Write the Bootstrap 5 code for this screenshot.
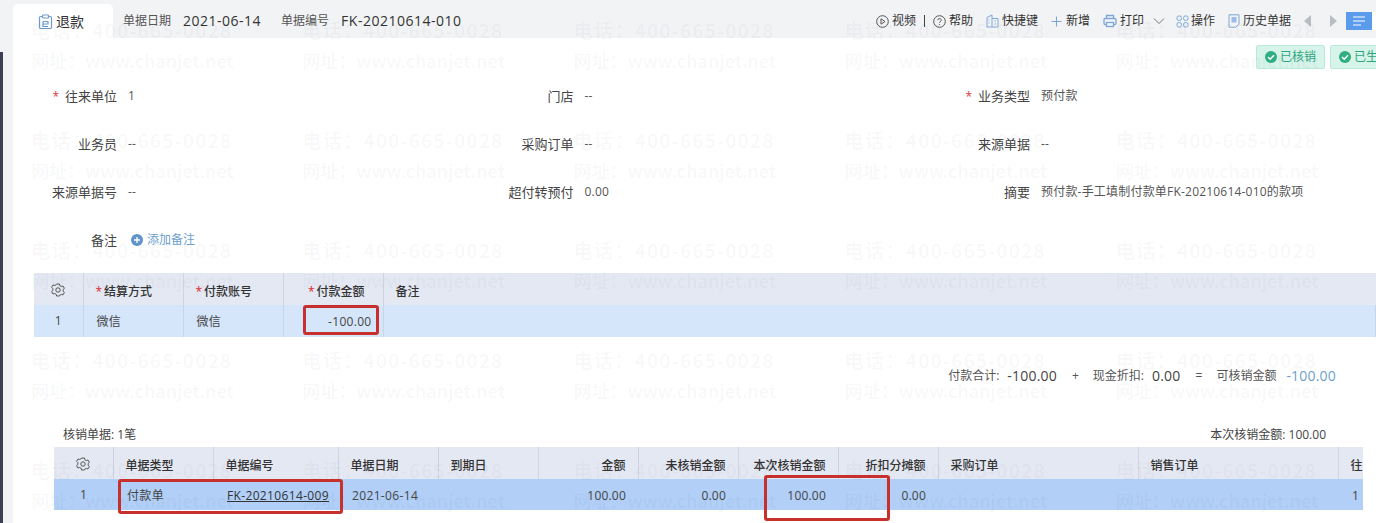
<!DOCTYPE html>
<html lang="zh">
<head>
<meta charset="utf-8">
<title>退款</title>
<link rel="stylesheet" href="https://cdn.jsdelivr.net/npm/bootstrap@5.3.0/dist/css/bootstrap.min.css">
<style>
html,body{height:523px;overflow:hidden;background:#f2f3f5}
body{font-family:"Open Sans","Noto Sans CJK SC",sans-serif;font-size:12px;color:#444;position:relative}
.side-strip{width:3px;background:#3d4054;flex:none;margin-top:52px}
.page-shell{width:1376px;height:523px}
.page-main{padding-left:10px;min-width:0;flex:1 1 auto}
.top-bar{height:38px;padding-top:4px}
.doc-tab{width:100px;height:34px;background:#fff;border-radius:5px 5px 0 0;padding-left:25px;font-size:14px;color:#333;line-height:36px;gap:3px;padding-top:2px}
.doc-tab svg{flex:none}
.meta-label{color:#555;margin-left:10px;margin-right:12px;line-height:34px}
.meta-value{font-size:14px;color:#333;letter-spacing:.5px;line-height:34px}
.meta-second{margin-left:20px}
.tool-strip{margin-left:auto;height:34px}
.tool-item{gap:3px;color:#333;white-space:nowrap}
.tool-item svg{display:block;flex:none}
.tool-sep{width:1px;height:12px;background:#444;margin:0 8px}
.gap-13{margin-left:13px}
.gap-9{margin-left:9px}
.gap-11{margin-left:11px}
.gap-17{margin-left:17px}
.grid-tool{gap:2px}
.plus-tool{gap:4px}
.menu-btn{width:26px;height:18px;background:#5a9bec;margin-left:9px}
.menu-rest{width:4px;height:18px;background:#fff}
.content-area{background:#fff;height:485px;position:relative;overflow:hidden}
.tag-row{position:absolute;top:7px;left:1243px;gap:5px;white-space:nowrap}
.state-tag{height:24px;background:#d6f4e9;border:1px solid #b9ead8;color:#2fa57d;padding:0 8px;gap:3px;border-radius:2px;font-size:12px}
.form-grid{display:grid;grid-template-columns:repeat(3,456.5px);grid-auto-rows:48px;padding-top:34px}
.form-cell{display:grid;grid-template-columns:104px 1fr;column-gap:11px;height:48px;line-height:48px;white-space:nowrap}
.form-label{text-align:right;color:#444;font-size:13px}
.req{color:#d9363e;margin-right:6px;font-size:12px}
.form-value{color:#555;letter-spacing:.2px}
.note-cell{grid-column:1/4}
.note-add{color:#6da0cf;gap:4px;margin-left:3px;line-height:1;height:48px}
.grid-one{margin-top:9px;margin-left:21px;position:relative}
.grid-two{margin-left:41px;position:relative;width:1309px}
.sheet{table-layout:fixed;margin:0;border-collapse:collapse;color:#444}
.sheet>*>tr>*{background:transparent;box-shadow:none;padding:0 12px;border:0;vertical-align:middle;white-space:nowrap;overflow:hidden;font-size:12px;color:#444;border-right:1px solid #cfd4df}
.sheet>thead>tr{background:#e4e8f2;height:32px}
.sheet>thead th{font-weight:500;color:#333;padding-top:5px}
.sheet>thead>tr>th:first-child,.sheet>tbody>tr>td:first-child{padding:0;text-align:center}
.sheet>*>tr>*:last-child{border-right:0}
.sheet .amt{text-align:right}
.sheet>tbody td{padding-top:2px;padding-left:13px;letter-spacing:.3px}
.sheet-one>thead .amt{padding-right:18px}
.sheet-one>tbody .amt{padding-right:11px;padding-left:0}
.sheet-two>tbody td{padding-left:14px;padding-top:3px;letter-spacing:.35px}
.sheet-two>tbody .amt{padding-right:12px;padding-left:0;letter-spacing:.2px}
.sheet-two>thead .amt{padding-right:12px;padding-left:0}
.row-soft{background:#d5e6fa;height:32px}
.row-strong{background:#b1cff7;height:31px}
.row-strong td{border-right:0!important}
.row-soft td{border-right:1px solid #c5d5ea!important}
.sheet .red-star{color:#d9262c;font-weight:400;margin-right:2px}
.doc-link{color:#333}
.mark-box{position:absolute;border:3px solid #c8302e;border-radius:3px;pointer-events:none}
.mark-a{left:269px;top:32px;width:76px;height:30px}
.mark-b{left:64px;top:32px;width:225px;height:35px}
.mark-c{left:710px;top:28px;width:126px;height:46px}
.sum-line{margin-top:23px;height:32px;padding-right:40px;line-height:32px;justify-content:flex-end;color:#555}
.sum-num{font-size:14px;color:#444;margin-left:8px;letter-spacing:.2px}
.sum-op{margin:0 14px 0 15px;color:#555}
.sum-blue{color:#6d9fcb;margin-left:10px}
.grid-caption{margin-top:31px;height:24px;padding:0 50px 0 50px;line-height:24px;color:#444}
.mark-layer{position:absolute;inset:0;pointer-events:none;z-index:5;display:grid;grid-template-columns:repeat(6,271.2px);grid-auto-rows:110px;padding-left:31px;padding-top:15px;font-family:"Noto Sans CJK SC","Open Sans",sans-serif;color:rgba(40,50,70,.05);font-size:19px;font-weight:500;line-height:30px;white-space:nowrap;overflow:hidden}
.mark-tel{letter-spacing:1.5px;display:block}
.mark-web{display:block;font-size:18px;letter-spacing:.1px}
</style>
</head>
<body>
<div class="page-shell d-flex">
  <div class="side-strip"></div>
  <div class="page-main">
    <div class="top-bar d-flex align-items-start">
      <div class="doc-tab d-flex align-items-center">
        <svg width="15" height="16" viewBox="0 0 15 16" fill="none" stroke="#6f9bd1" stroke-width="1.2"><path d="M4 2.5H2.8A1.3 1.3 0 0 0 1.5 3.8v9.4a1.3 1.3 0 0 0 1.3 1.3h9.4a1.3 1.3 0 0 0 1.3-1.3V3.8a1.3 1.3 0 0 0-1.3-1.3H11"/><rect x="4.5" y="1" width="6" height="3" rx=".7"/><path d="M5 7.5h5v2.5H5M5 7.5v5h5"/></svg>
        <span>退款</span>
      </div>
      <span class="meta-label">单据日期</span><span class="meta-value">2021-06-14</span>
      <span class="meta-label meta-second">单据编号</span><span class="meta-value">FK-20210614-010</span>
      <div class="tool-strip d-flex align-items-center">
        <span class="tool-item d-flex align-items-center"><svg width="13" height="13" viewBox="0 0 13 13" fill="none" stroke="#555"><circle cx="6.5" cy="6.5" r="5.8"/><path d="M5 3.8v5.4l4-2.7z"/></svg>视频</span>
        <span class="tool-sep"></span>
        <span class="tool-item d-flex align-items-center"><svg width="13" height="13" viewBox="0 0 13 13" fill="none" stroke="#555"><circle cx="6.5" cy="6.5" r="5.8"/><path d="M4.8 5.2a1.7 1.7 0 1 1 2.5 1.5c-.6.3-.8.6-.8 1.2M6.5 9.2v.9"/></svg>帮助</span>
        <span class="tool-item gap-13 d-flex align-items-center"><svg width="13" height="14" viewBox="0 0 13 14" fill="none" stroke="#7ea6d8"><path d="M1 13V3.5L6 1v12M6 4.5h6V13H.5M3 5.5v1M3 8.5v1M8.5 7h1.5M8.5 10h1.5"/></svg>快捷键</span>
        <span class="tool-item plus-tool gap-13 d-flex align-items-center"><svg width="11" height="11" viewBox="0 0 11 11" fill="none" stroke="#7ea6d8" stroke-width="1.1"><path d="M5.5 .5v10M.5 5.5h10"/></svg>新增</span>
        <span class="tool-item gap-13 d-flex align-items-center"><svg width="14" height="14" viewBox="0 0 14 14" fill="none" stroke="#7ea6d8" stroke-width="1.3"><path d="M3.5 4.5V1.5h7v3"/><path d="M3.5 10.5H2.2A1.2 1.2 0 0 1 1 9.3V5.7a1.2 1.2 0 0 1 1.2-1.2h9.6A1.2 1.2 0 0 1 13 5.7v3.6a1.2 1.2 0 0 1-1.2 1.2h-1.3"/><rect x="3.5" y="8.5" width="7" height="4"/></svg>打印</span>
        <svg class="gap-9" width="12" height="8" viewBox="0 0 12 8" fill="none" stroke="#777"><path d="M1 1.5l5 5 5-5"/></svg>
        <span class="tool-item grid-tool gap-11 d-flex align-items-center"><svg width="13" height="13" viewBox="0 0 13 13" fill="none" stroke="#7ea6d8"><rect x="1" y="1" width="4.4" height="4.4" rx="1.6"/><rect x="7.6" y="1" width="4.4" height="4.4" rx="1.6"/><rect x="1" y="7.6" width="4.4" height="4.4" rx="1.6"/><rect x="7.6" y="7.6" width="4.4" height="4.4" rx="1.6"/></svg>操作</span>
        <span class="tool-item gap-13 d-flex align-items-center"><svg width="12" height="14" viewBox="0 0 12 14" fill="none" stroke="#7ea6d8"><path d="M1 .8h10v9.5L7.5 13.2H1z"/><path d="M3.5 3h5v5.5h-5z" fill="#9dbde6" stroke="none"/></svg>历史单据</span>
        <svg class="gap-13" width="8" height="12" viewBox="0 0 8 12" fill="#b8bcc3"><path d="M7 0v12L0 6z"/></svg>
        <svg class="gap-17" width="8" height="12" viewBox="0 0 8 12" fill="#b8bcc3"><path d="M1 0v12l7-6z"/></svg>
        <div class="menu-btn d-flex align-items-center justify-content-center"><svg width="14" height="10" viewBox="0 0 14 10" stroke="#fff"><path d="M1 1h12M1 5h12M1 9h8"/></svg></div>
        <div class="menu-rest"></div>
      </div>
    </div>

    <div class="content-area">
      <div class="tag-row d-flex">
        <span class="state-tag d-inline-flex align-items-center"><svg width="12" height="12" viewBox="0 0 12 12"><circle cx="6" cy="6" r="6" fill="#2fae82"/><path d="M3 6l2.2 2.2L9 4.2" fill="none" stroke="#fff" stroke-width="1.5"/></svg>已核销</span>
        <span class="state-tag d-inline-flex align-items-center"><svg width="12" height="12" viewBox="0 0 12 12"><circle cx="6" cy="6" r="6" fill="#2fae82"/><path d="M3 6l2.2 2.2L9 4.2" fill="none" stroke="#fff" stroke-width="1.5"/></svg>已生成</span>
      </div>

      <div class="form-grid">
        <div class="form-cell"><span class="form-label"><span class="req">*</span>往来单位</span><span class="form-value">1</span></div>
        <div class="form-cell"><span class="form-label">门店</span><span class="form-value">--</span></div>
        <div class="form-cell"><span class="form-label"><span class="req">*</span>业务类型</span><span class="form-value">预付款</span></div>
        <div class="form-cell"><span class="form-label">业务员</span><span class="form-value">--</span></div>
        <div class="form-cell"><span class="form-label">采购订单</span><span class="form-value">--</span></div>
        <div class="form-cell"><span class="form-label">来源单据</span><span class="form-value">--</span></div>
        <div class="form-cell"><span class="form-label">来源单据号</span><span class="form-value">--</span></div>
        <div class="form-cell"><span class="form-label">超付转预付</span><span class="form-value">0.00</span></div>
        <div class="form-cell"><span class="form-label">摘要</span><span class="form-value">预付款-手工填制付款单FK-20210614-010的款项</span></div>
        <div class="form-cell note-cell"><span class="form-label">备注</span><span class="note-add d-inline-flex align-items-center"><svg width="12" height="12" viewBox="0 0 12 12"><circle cx="6" cy="6" r="6" fill="#5f93c9"/><path d="M3 6h6M6 3v6" stroke="#fff" stroke-width="1.3"/></svg>添加备注</span></div>
      </div>

      <div class="grid-one">
        <table class="table sheet sheet-one" style="width:1342px">
          <colgroup><col style="width:49px"><col style="width:100px"><col style="width:100px"><col style="width:100px"><col></colgroup>
          <thead><tr>
            <th><svg width="14" height="14" viewBox="0 0 14 14" fill="none" stroke="#555"><path d="M5.6 1h2.8l.4 1.7 1.5.8 1.7-.5 1.4 2.4-1.3 1.2v1.7l1.3 1.2-1.4 2.4-1.7-.5-1.5.8L8.4 13H5.6l-.4-1.7-1.5-.8-1.7.5L.6 8.6l1.3-1.2V5.7L.6 4.4 2 2l1.7.5 1.5-.8z"/><circle cx="7" cy="7" r="2.2"/></svg></th>
            <th><span class="red-star">*</span>结算方式</th>
            <th><span class="red-star">*</span>付款账号</th>
            <th class="amt"><span class="red-star">*</span>付款金额</th>
            <th>备注</th>
          </tr></thead>
          <tbody><tr class="row-soft"><td>1</td><td>微信</td><td>微信</td><td class="amt">-100.00</td><td></td></tr></tbody>
        </table>
        <div class="mark-box mark-a"></div>
      </div>

      <div class="sum-line d-flex">
        <span>付款合计:</span><span class="sum-num">-100.00</span>
        <span class="sum-op">+</span>
        <span>现金折扣:</span><span class="sum-num">0.00</span>
        <span class="sum-op">=</span>
        <span>可核销金额</span><span class="sum-num sum-blue">-100.00</span>
      </div>

      <div class="grid-caption d-flex justify-content-between"><span>核销单据: 1笔</span><span>本次核销金额: 100.00</span></div>

      <div class="grid-two">
        <table class="table sheet sheet-two" style="width:1309px">
          <colgroup><col style="width:59px"><col style="width:100px"><col style="width:125px"><col style="width:100px"><col style="width:100px"><col style="width:100px"><col style="width:100px"><col style="width:100px"><col style="width:100px"><col style="width:200px"><col style="width:200px"><col style="width:25px"></colgroup>
          <thead><tr>
            <th><svg width="14" height="14" viewBox="0 0 14 14" fill="none" stroke="#555"><path d="M5.6 1h2.8l.4 1.7 1.5.8 1.7-.5 1.4 2.4-1.3 1.2v1.7l1.3 1.2-1.4 2.4-1.7-.5-1.5.8L8.4 13H5.6l-.4-1.7-1.5-.8-1.7.5L.6 8.6l1.3-1.2V5.7L.6 4.4 2 2l1.7.5 1.5-.8z"/><circle cx="7" cy="7" r="2.2"/></svg></th>
            <th>单据类型</th><th>单据编号</th><th>单据日期</th><th>到期日</th>
            <th class="amt">金额</th><th class="amt">未核销金额</th><th class="amt">本次核销金额</th><th class="amt">折扣分摊额</th>
            <th>采购订单</th><th>销售订单</th><th>往来单位</th>
          </tr></thead>
          <tbody><tr class="row-strong"><td>1</td><td>付款单</td><td><a class="doc-link" href="#">FK-20210614-009</a></td><td>2021-06-14</td><td></td><td class="amt">100.00</td><td class="amt">0.00</td><td class="amt">100.00</td><td class="amt">0.00</td><td></td><td></td><td>1</td></tr></tbody>
        </table>
        <div class="mark-box mark-b"></div>
        <div class="mark-box mark-c"></div>
      </div>
    </div>
  </div>
</div>
<div class="mark-layer" aria-hidden="true">
  <div><span class="mark-tel">电话：400-665-0028</span><span class="mark-web">网址：www.chanjet.net</span></div><div><span class="mark-tel">电话：400-665-0028</span><span class="mark-web">网址：www.chanjet.net</span></div><div><span class="mark-tel">电话：400-665-0028</span><span class="mark-web">网址：www.chanjet.net</span></div><div><span class="mark-tel">电话：400-665-0028</span><span class="mark-web">网址：www.chanjet.net</span></div><div><span class="mark-tel">电话：400-665-0028</span><span class="mark-web">网址：www.chanjet.net</span></div><div></div>
  <div><span class="mark-tel">电话：400-665-0028</span><span class="mark-web">网址：www.chanjet.net</span></div><div><span class="mark-tel">电话：400-665-0028</span><span class="mark-web">网址：www.chanjet.net</span></div><div><span class="mark-tel">电话：400-665-0028</span><span class="mark-web">网址：www.chanjet.net</span></div><div><span class="mark-tel">电话：400-665-0028</span><span class="mark-web">网址：www.chanjet.net</span></div><div><span class="mark-tel">电话：400-665-0028</span><span class="mark-web">网址：www.chanjet.net</span></div><div></div>
  <div><span class="mark-tel">电话：400-665-0028</span><span class="mark-web">网址：www.chanjet.net</span></div><div><span class="mark-tel">电话：400-665-0028</span><span class="mark-web">网址：www.chanjet.net</span></div><div><span class="mark-tel">电话：400-665-0028</span><span class="mark-web">网址：www.chanjet.net</span></div><div><span class="mark-tel">电话：400-665-0028</span><span class="mark-web">网址：www.chanjet.net</span></div><div><span class="mark-tel">电话：400-665-0028</span><span class="mark-web">网址：www.chanjet.net</span></div><div></div>
  <div><span class="mark-tel">电话：400-665-0028</span><span class="mark-web">网址：www.chanjet.net</span></div><div><span class="mark-tel">电话：400-665-0028</span><span class="mark-web">网址：www.chanjet.net</span></div><div><span class="mark-tel">电话：400-665-0028</span><span class="mark-web">网址：www.chanjet.net</span></div><div><span class="mark-tel">电话：400-665-0028</span><span class="mark-web">网址：www.chanjet.net</span></div><div><span class="mark-tel">电话：400-665-0028</span><span class="mark-web">网址：www.chanjet.net</span></div><div></div>
  <div><span class="mark-tel">电话：400-665-0028</span><span class="mark-web">网址：www.chanjet.net</span></div><div><span class="mark-tel">电话：400-665-0028</span><span class="mark-web">网址：www.chanjet.net</span></div><div><span class="mark-tel">电话：400-665-0028</span><span class="mark-web">网址：www.chanjet.net</span></div><div><span class="mark-tel">电话：400-665-0028</span><span class="mark-web">网址：www.chanjet.net</span></div><div><span class="mark-tel">电话：400-665-0028</span><span class="mark-web">网址：www.chanjet.net</span></div><div></div>
</div>
<script src="https://cdn.jsdelivr.net/npm/bootstrap@5.3.0/dist/js/bootstrap.bundle.min.js"></script>
</body>
</html>
